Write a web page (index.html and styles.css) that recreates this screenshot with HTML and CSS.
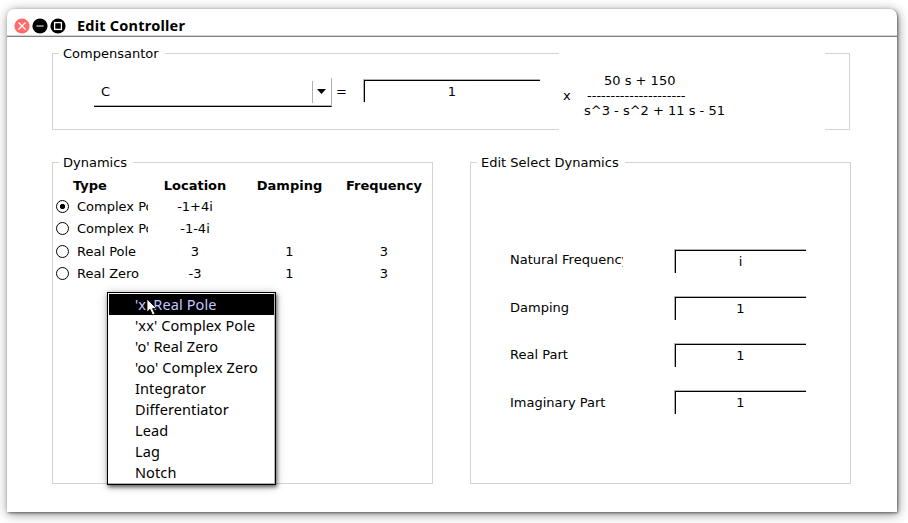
FILE: index.html
```html
<!DOCTYPE html>
<html lang="en">
<head>
<meta charset="utf-8">
<title>Edit Controller</title>
<link rel="stylesheet" href="styles.css">
</head>
<body>
<div class="window">
  <header class="titlebar">
    <svg class="controls" width="54" height="18" viewBox="0 0 54 18">
      <circle cx="9" cy="9" r="7.6" fill="#ff6a6a"/>
      <path d="M5.5 5.5L12.5 12.5M12.5 5.5L5.5 12.5" stroke="#fff" stroke-width="1.2"/>
      <circle cx="27" cy="9" r="7.6" fill="#000"/>
      <path d="M23.5 9H30.5" stroke="#bbb" stroke-width="1.4"/>
      <circle cx="45" cy="9" r="7.6" fill="#000"/>
      <rect x="41.6" y="5.6" width="6.8" height="6.8" fill="none" stroke="#fff" stroke-width="1.3"/>
    </svg>
    <h1 class="title">Edit Controller</h1>
  </header>
  <main class="content">
    <section class="panel compensator">
      <h2 class="legend">Compensantor</h2>
      <div class="combo"><span class="combo-value">C</span><span class="combo-button"><svg width="9" height="5" viewBox="0 0 9 5"><path d="M0 0H9L4.5 5Z"/></svg></span></div>
      <span class="equals">=</span>
      <div class="field gain">1</div>
      <div class="expression">
        <span class="times">x</span>
        <div class="fraction">
          <span class="numerator">50 s + 150</span>
          <span class="bar">---------------------</span>
          <span class="denominator">s^3 - s^2 + 11 s - 51</span>
        </div>
      </div>
    </section>
    <section class="panel dynamics">
      <h2 class="legend">Dynamics</h2>
      <div class="row head"><span class="type">Type</span><span>Location</span><span>Damping</span><span>Frequency</span></div>
      <div class="row"><span class="type"><i class="radio checked"></i>Complex Pole</span><span>-1+4i</span><span></span><span></span></div>
      <div class="row tall"><span class="type"><i class="radio"></i>Complex Pole</span><span>-1-4i</span><span></span><span></span></div>
      <div class="row"><span class="type"><i class="radio"></i>Real Pole</span><span>3</span><span>1</span><span>3</span></div>
      <div class="row"><span class="type"><i class="radio"></i>Real Zero</span><span>-3</span><span>1</span><span>3</span></div>
      <div class="menu">
        <div class="item active">'x' Real Pole</div>
        <div class="item">'xx' Complex Pole</div>
        <div class="item">'o' Real Zero</div>
        <div class="item">'oo' Complex Zero</div>
        <div class="item">Integrator</div>
        <div class="item">Differentiator</div>
        <div class="item">Lead</div>
        <div class="item">Lag</div>
        <div class="item">Notch</div>
        <svg class="cursor" width="12" height="19" viewBox="0 0 12 19"><path d="M1 1V14L4 11.3L6.5 17L9 16L6.5 10.5H10.5Z" fill="#fff" stroke="#000" stroke-width=".8"/></svg>
      </div>
    </section>
    <section class="panel edit">
      <h2 class="legend">Edit Select Dynamics</h2>
      <div class="labels"><span>Natural Frequency</span><span>Damping</span><span>Real Part</span><span>Imaginary Part</span></div>
      <div class="fields"><div class="field">i</div><div class="field">1</div><div class="field">1</div><div class="field">1</div></div>
    </section>
  </main>
</div>
</body>
</html>
```
FILE: styles.css
```css
* { box-sizing: border-box; }
body {
  margin: 0;
  padding: 9px 11px 11px 7px;
  height: 523px;
  overflow: hidden;
  background: #fff;
  color: #000;
  font: 13px/15px "DejaVu Sans", sans-serif;
}
.window {
  height: 503px;
  background: #fff;
  border-radius: 7px 7px 0 0;
  box-shadow: 1px 1px 3px rgba(0,0,0,.5), 1px 2px 12px rgba(0,0,0,.45);
}
.titlebar {
  display: flex;
  align-items: center;
  height: 28px;
  padding: 6px 0 0 6px;
  border-bottom: 1px solid #808080;
  box-shadow: inset 0 -1px #d4d4d4;
}
.controls { display: block; }
.title {
  margin: 0 0 1px 10px;
  font: bold 14.5px/18px "Noto Sans", sans-serif;
  letter-spacing: .22px;
  white-space: nowrap;
}
.content {
  display: grid;
  grid-template-columns: 381px 381px;
  grid-template-rows: 77px 322px;
  gap: 32px 37px;
  padding: 16px 0 0 45px;
}
.panel { position: relative; border: 1px solid #d3d3d3; }
.legend {
  position: absolute;
  top: -8px;
  left: 6px;
  margin: 0;
  padding: 0 6px 0 4px;
  background: #fff;
  font: inherit;
  white-space: nowrap;
}
.compensator {
  grid-column: 1 / 3;
  width: 798px;
  display: flex;
  align-items: flex-start;
  padding-left: 41px;
}
.combo {
  display: flex;
  width: 238px;
  height: 29px;
  margin-top: 24px;
  border-right: 1px solid #b0b0b0;
  border-bottom: 1px solid #000;
  box-shadow: inset 0 -1px #b0b0b0;
}
.combo-value { flex: 1; padding: 6px 0 0 7px; }
.combo-button {
  width: 19px;
  height: 22px;
  margin-top: 3px;
  padding: 8px 0 0 4px;
  border-left: 1px solid #b0b0b0;
}
.combo-button svg { display: block; }
.equals { width: 31px; padding: 30px 0 0 4px; }
.field {
  width: 132px;
  height: 24px;
  padding-top: 4px;
  border-top: 1px solid #b0b0b0;
  border-left: 1px solid #b0b0b0;
  box-shadow: inset 1px 1px #000;
  text-align: center;
}
.gain { width: 177px; height: 23px; margin: 25px 1px 0 0; }
.expression {
  display: flex;
  align-items: center;
  width: 266px;
  height: 77px;
  margin: -1px 0 0 18px;
  padding: 7px 0 0 4px;
  background: #fff;
}
.times { width: 21px; }
.fraction span { display: block; white-space: nowrap; }
.numerator { padding-left: 20px; }
.bar { padding-left: 3px; }
.dynamics { padding-top: 12px; }
.row {
  display: grid;
  grid-template-columns: 95px 94px 95px 94px;
  height: 22px;
  line-height: 22px;
  text-align: center;
}
.head { height: 21px; line-height: 21px; font-weight: bold; }
.tall { height: 23px; }
.type {
  display: flex;
  align-items: center;
  height: 22px;
  overflow: hidden;
  padding-left: 3px;
  white-space: nowrap;
}
.head .type { height: 21px; padding-left: 20px; }
.radio {
  flex: none;
  width: 13px;
  height: 13px;
  margin: 0 8px 1px 0;
  border: 1px solid #000;
  border-radius: 50%;
}
.checked { background: radial-gradient(circle, #000 2.3px, transparent 3px); }
.menu {
  position: absolute;
  top: 129px;
  left: 54px;
  width: 169px;
  height: 193px;
  padding: 1px;
  border: 1px solid #000;
  background: #fff;
  box-shadow: inset -1px -1px #b0b5b0, 1px 2px 4px rgba(0,0,0,.6), 0 1px 10px rgba(0,0,0,.2);
  font: 14.5px/21px "Noto Sans", sans-serif;
  letter-spacing: .1px;
}
.item { height: 21px; padding-left: 26px; white-space: nowrap; }
.active { background: #000; color: #c5c5ff; }
.cursor { position: absolute; left: 38px; top: 5px; }
.edit { display: flex; padding-left: 39px; }
.labels {
  display: flex;
  flex-direction: column;
  gap: 32.6px;
  width: 113px;
  margin-right: 51px;
  padding-top: 89px;
}
.labels span { overflow: hidden; white-space: nowrap; }
.fields {
  display: flex;
  flex-direction: column;
  gap: 23px;
  padding-top: 86px;
}
```
